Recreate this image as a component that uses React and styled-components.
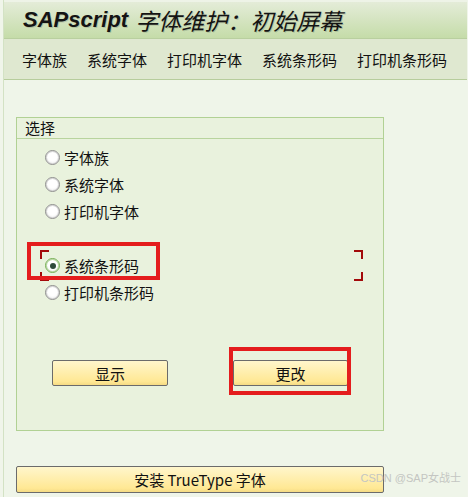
import React from 'react'
import styled, { createGlobalStyle } from 'styled-components'

const Global = createGlobalStyle`
  html, body { margin: 0; padding: 0; background: #f0f5ea; }
  body { font-family: "Noto Sans CJK SC", "Liberation Sans", sans-serif; }
`

const Frame = styled.div`
  position: relative;
  margin-left: 3px;
  width: 464px;
  height: 497px;
  border-left: 1px solid #d3e2c4;
  background: #eff5e9;
  box-sizing: border-box;
`

const TitleBar = styled.div`
  height: 36px;
  border-top: 2px solid #eef3e7;
  border-bottom: 1px solid #b9cf9f;
  background: linear-gradient(#e4ecd8, #c5dca9);
  display: flex;
  align-items: center;
  padding-left: 19px;
  font-family: "Liberation Sans", "Noto Sans CJK SC", sans-serif;
  font-size: 22px;
  font-style: italic;
  color: #141414;
  text-shadow: 1px 1px 0 rgba(0, 0, 0, 0.15);
  b { font-weight: 700; margin-right: 7px; }
  span { font-family: "Noto Sans CJK SC", sans-serif; font-weight: 400; font-size: 23px; }
`

const MenuBar = styled.div`
  height: 40px;
  border-bottom: 1px solid #b7cd9c;
  background: #dfe8d0;
  display: flex;
  align-items: center;
  gap: 20px;
  padding-left: 18px;
  font-size: 15px;
  color: #111;
`

const MenuItem = styled.div`
  white-space: nowrap;
`

const Body = styled.div`
  padding: 37px 0 0 12px;
`

const GroupBox = styled.div`
  width: 368px;
  height: 314px;
  box-sizing: border-box;
  border: 1px solid #b1d194;
  background: #e9f2dd;
`

const GroupHeader = styled.div`
  height: 21px;
  box-sizing: border-box;
  border-bottom: 1px solid #b8d49d;
  padding-left: 8px;
  font-size: 15px;
  line-height: 20px;
  color: #111;
`

const RadioList = styled.div`
  padding: 5px 0 0 28px;
  display: flex;
  flex-direction: column;
`

const RadioRow = styled.div`
  position: relative;
  height: 27px;
  display: flex;
  align-items: center;
  gap: 4px;
  font-size: 15px;
  color: #111;
  margin-top: ${p => (p.$gap ? '27px' : '0')};
`

const Circle = styled.span`
  width: 15px;
  height: 15px;
  box-sizing: border-box;
  border-radius: 50%;
  border: 1px solid ${p => (p.$on ? '#74ad52' : '#8f8f8f')};
  box-shadow: inset 0 0 0 1px ${p => (p.$on ? '#b7d9a0' : '#d6d6d6')};
  background: radial-gradient(circle at 50% 40%, #ffffff 45%, #e4e4e4 100%);
  display: flex;
  align-items: center;
  justify-content: center;
  &::after {
    content: '';
    display: ${p => (p.$on ? 'block' : 'none')};
    width: 6px;
    height: 6px;
    border-radius: 50%;
    background: #2e4a3a;
  }
`

const Highlight = styled.div`
  position: absolute;
  border: 4px solid #e41d1d;
  box-sizing: border-box;
  pointer-events: none;
`

const Corner = styled.span`
  position: absolute;
  width: 7px;
  height: 7px;
  border-color: #a30a0a;
  border-style: solid;
  border-width: 0;
  ${p => (p.$top ? 'border-top-width: 2px;' : 'border-bottom-width: 2px;')}
  ${p => (p.$left ? 'border-left-width: 2px;' : 'border-right-width: 2px;')}
`

const ButtonRow = styled.div`
  display: flex;
  gap: 65px;
  padding: 54px 0 0 35px;
`

const Button = styled.div`
  position: relative;
  width: ${p => p.$w}px;
  height: ${p => p.$h || 26}px;
  box-sizing: border-box;
  border: 1px solid #6b6b6b;
  border-radius: 2px;
  background: linear-gradient(#fff6cc, #ffe894 85%, #f5db84);
  display: flex;
  align-items: center;
  justify-content: center;
  font-size: 15px;
  color: #111;
  font-family: "Noto Sans CJK SC", "Liberation Sans", sans-serif;
`

const Footer = styled.div`
  padding-top: 35px;
`

const Watermark = styled.div`
  position: absolute;
  right: 6px;
  bottom: 12px;
  font-size: 11px;
  color: #c4c6c2;
  font-family: "Liberation Sans", "Noto Sans CJK SC", sans-serif;
`

export default function App() {
  return (
    <>
      <Global />
      <Frame>
        <TitleBar>
          <b>SAPscript</b>
          <span>字体维护：初始屏幕</span>
        </TitleBar>
        <MenuBar>
          <MenuItem>字体族</MenuItem>
          <MenuItem>系统字体</MenuItem>
          <MenuItem>打印机字体</MenuItem>
          <MenuItem>系统条形码</MenuItem>
          <MenuItem>打印机条形码</MenuItem>
        </MenuBar>
        <Body>
          <GroupBox>
            <GroupHeader>选择</GroupHeader>
            <RadioList>
              <RadioRow><Circle />字体族</RadioRow>
              <RadioRow><Circle />系统字体</RadioRow>
              <RadioRow><Circle />打印机字体</RadioRow>
              <RadioRow $gap>
                <Corner $top $left style={{ left: -5, top: -2 }} />
                <Corner $left style={{ left: -5, bottom: -2 }} />
                <Corner $top style={{ left: 309, top: -2 }} />
                <Corner style={{ left: 309, bottom: -2 }} />
                <Circle $on />系统条形码
                <Highlight style={{ left: -18, top: -10, width: 133, height: 38 }} />
              </RadioRow>
              <RadioRow><Circle />打印机条形码</RadioRow>
            </RadioList>
            <ButtonRow>
              <Button $w={116}>显示</Button>
              <Button $w={115}>
                更改
                <Highlight style={{ left: -5, top: -14, width: 122, height: 48 }} />
              </Button>
            </ButtonRow>
          </GroupBox>
          <Footer>
            <Button $w={368} $h={27}>安装 TrueType 字体</Button>
          </Footer>
        </Body>
        <Watermark>CSDN @SAP女战士</Watermark>
      </Frame>
    </>
  )
}
